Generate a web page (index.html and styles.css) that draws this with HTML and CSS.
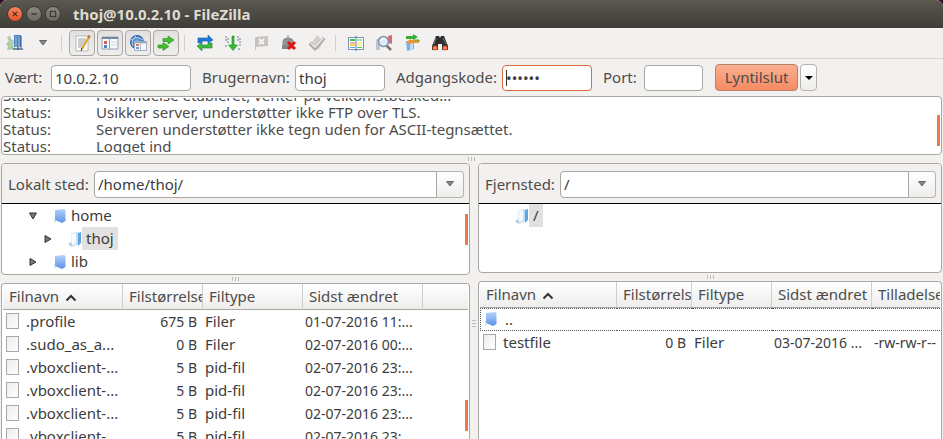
FILE: index.html
```html
<!DOCTYPE html>
<html lang="da">
<head>
<meta charset="utf-8">
<title>thoj@10.0.2.10 - FileZilla</title>
<link rel="stylesheet" href="styles.css">
</head>
<body>
<svg class="defs" aria-hidden="true">
  <defs>
    <linearGradient id="blue" x1="0" y1="0" x2="0" y2="1"><stop offset="0" stop-color="#b4d2fb"/><stop offset="1" stop-color="#5a92e8"/></linearGradient>
    <linearGradient id="open" x1="0" y1="0" x2="1" y2="0"><stop offset="0" stop-color="#e4f1f8"/><stop offset="1" stop-color="#b9ddf0"/></linearGradient>
    <linearGradient id="paper" x1="0" y1="0" x2="1" y2="1"><stop offset="0" stop-color="#ececec"/><stop offset="1" stop-color="#fff"/></linearGradient>
    <radialGradient id="globe"><stop offset="0" stop-color="#8fc1ee"/><stop offset="1" stop-color="#2458a8"/></radialGradient>
  </defs>
  <symbol id="folder" viewBox="0 0 14 16"><path d="M2 2 11 1 12.500 2V13L9 15 2 12Z" fill="url(#blue)"/><path d="M1 10 3 12.500 2.500 15 1 14Z" fill="#d9dde4"/></symbol>
  <symbol id="folder-open" viewBox="0 0 14 16"><path d="M3 2 10 1V14L3 13Z" fill="url(#open)"/><path d="M10 2 13 1V12L10 15Z" fill="#5fa5e2"/><path d="M4 3 8 2V12L4 13Z" fill="#f4fafd"/><path d="M0 13 3 11 4 14 9 15 3 15.500Z" fill="#b8c9d8"/></symbol>
  <symbol id="file" viewBox="0 0 13 16"><rect x=".5" y=".5" width="12" height="15" fill="url(#paper)" stroke="#a8a8a8"/></symbol>
  <symbol id="closed" viewBox="0 0 8 8"><path d="M1 .500 7 4 1 7.500Z" fill="#777" stroke="#333"/></symbol>
  <symbol id="opened" viewBox="0 0 8 8"><path d="M.500 1H7.500L4 7Z" fill="#777" stroke="#333"/></symbol>
  <symbol id="down" viewBox="0 0 8 6"><path d="M.500 .500H7.500L4 5Z" fill="#888" stroke="#666"/></symbol>
  <symbol id="sort" viewBox="0 0 12 8"><path d="M1.500 6.500 6 2 10.500 6.500" fill="none" stroke="#333" stroke-width="2"/></symbol>
</svg>

<div class="window">
  <header class="titlebar">
    <button class="wm wm-close" aria-label="Luk"><svg viewBox="0 0 16 16"><path d="M5.500 5.500 10.500 10.500M10.500 5.500 5.500 10.500" stroke="#4b2a1d" stroke-width="1.300"/></svg></button>
    <button class="wm" aria-label="Minimer"><svg viewBox="0 0 16 16"><path d="M5 8H11" stroke="#3a3935" stroke-width="1.500"/></svg></button>
    <button class="wm" aria-label="Maksimer"><svg viewBox="0 0 16 16"><rect x="5" y="5" width="6" height="6" fill="none" stroke="#3a3935" stroke-width="1.300"/></svg></button>
    <h1>thoj@10.0.2.10 - FileZilla</h1>
  </header>

  <nav class="toolbar">
    <button class="tool" aria-label="Stedhåndtering"><svg viewBox="0 0 18 18"><path d="M1 3 4 2 5 5 8 7 7 12 9 15 1 16 2 12 0 10 3 7Z" fill="#a9c8a4"/><path d="M2 6 6 9 3 13" fill="none" stroke="#c9dcc4"/><path d="M8 1H15V13H8Z" fill="#4b80bd"/><path d="M10 2V13M13 2V13" stroke="#a9c7e8"/><path d="M15 2V14" stroke="#2f5992"/><path d="M7 15H17M12 13V16" stroke="#506b8e" stroke-width="1.500"/></svg></button>
    <button class="tool" aria-label="Vælg sted"><svg class="arrow" viewBox="0 0 8 6"><use href="#down"/></svg></button>
    <span class="divider"></span>
    <button class="tool toggle" aria-label="Meddelelseslog"><svg viewBox="0 0 18 18"><path d="M3 2H15V17H3Z" fill="#fff" stroke="#b5b5b5"/><path d="M5 5H13M5 7H13M5 9H12M5 11H11M5 13H10" stroke="#999"/><path d="M16 3 9 15" stroke="#e2a51f" stroke-width="2"/><path d="M16.500 1.500 15.500 4" stroke="#c76b50" stroke-width="2.500"/><path d="M9 14 8 17" stroke="#333"/></svg></button>
    <button class="tool toggle" aria-label="Lokalt mappetræ"><svg viewBox="0 0 18 18"><path d="M1 3H17V15H1Z" fill="#f8f9fb" stroke="#8ea2b6"/><path d="M1 4H17" stroke="#7189a3" stroke-width="2"/><path d="M8.500 4V15" stroke="#8ea2b6"/><rect x="3" y="7" width="3" height="3" fill="#d65a55"/><rect x="3" y="11" width="3" height="3" fill="#5187c8"/><path d="M10 8H16M10 11H16" stroke="#ccd4dd"/></svg></button>
    <button class="tool toggle" aria-label="Fjernmappetræ"><svg viewBox="0 0 18 18"><circle cx="8" cy="8" r="7" fill="url(#globe)"/><path d="M2 6Q8 1 14 6M4 12Q1 7 7 2" stroke="#b8d8f5" fill="none"/><path d="M5.500 7.500H17.500V16.500H5.500Z" fill="#f7f8fb" stroke="#a2afc2"/><path d="M6 8.500H17" stroke="#91a4bb" stroke-width="1.500"/><path d="M11.500 9V16" stroke="#b3bdca"/><rect x="7" y="10" width="3" height="2" fill="#df7369"/><rect x="7" y="13" width="3" height="2" fill="#6a9ad2"/></svg></button>
    <button class="tool toggle" aria-label="Overførselskø"><svg viewBox="0 0 18 18"><path d="M6 4.500H11V2L17 6 11 10V7.500H6Z" fill="#43bd32" stroke="#2c9a28" stroke-width=".7"/><path d="M1 11H6V8.500L12 12.500 6 16.500V14H1Z" fill="#43bd32" stroke="#2c9a28" stroke-width=".7"/></svg></button>
    <span class="divider"></span>
    <button class="tool" aria-label="Opdater"><svg viewBox="0 0 18 18"><path d="M2 9V4H12V1L17 6 12 9V7H6V9Z" fill="#2178d4" stroke="#145ba9" stroke-width=".6"/><path d="M16 9V14H6V17L1 12 6 9V11H12V9Z" fill="#40ba43" stroke="#188028" stroke-width=".6"/></svg></button>
    <button class="tool" aria-label="Behandl kø"><svg viewBox="0 0 18 18"><path d="M2 2V7M4 4V10M14 2V8M16 4V12M2 11V13M15 14V16" stroke="#a9b9bd" stroke-width="2" stroke-dasharray="2 1"/><path d="M8 2H10V11H13.500L9 16.500 4.500 11H8Z" fill="#37b932" stroke="#1b8e20" stroke-width=".6"/></svg></button>
    <button class="tool" aria-label="Annuller"><svg viewBox="0 0 18 18"><path d="M3 3 16 2V12L4 13V16H3Z" fill="#c6c4c1"/><path d="M7 5 12 10M12 5 7 10" stroke="#f7f6f5" stroke-width="2"/></svg></button>
    <button class="tool" aria-label="Afbryd"><svg viewBox="0 0 18 18"><path d="M8 1V4M3 14V8Q3 4 8 4T13 8V14Z" fill="#929292" stroke="#8b8b8b"/><path d="M2 11H10V15H2Z" fill="#858585"/><path d="M8 8 15 15M15 8 8 15" stroke="#db1718" stroke-width="3"/></svg></button>
    <button class="tool" aria-label="Genopret"><svg viewBox="0 0 18 18"><path d="M9 1 15 7 12 14 9 16 3 10Z" fill="#d3d1cf"/><path d="M2 9 7 14 16 4" fill="none" stroke="#aaa8a6" stroke-width="4"/><path d="M3 9 7 13 15 4" fill="none" stroke="#e5e3e1" stroke-width="2"/></svg></button>
    <span class="divider"></span>
    <button class="tool" aria-label="Sammenlign mapper"><svg viewBox="0 0 18 18"><path d="M1.500 3.500H16.500V15.500H1.500Z" fill="#fff" stroke="#7893b1"/><path d="M3 6H8" stroke="#37c64a" stroke-width="2"/><path d="M3 9H8" stroke="#ee635e"/><path d="M3 11H8" stroke="#f6d84e" stroke-width="2"/><path d="M3 13.500H8" stroke="#5ba5e4"/><path d="M10 6H15M10 13.500H15" stroke="#43c953"/><path d="M10 9H15M10 11H15" stroke="#f2df55"/><path d="M9 2V17" stroke="#537aa5"/></svg></button>
    <button class="tool" aria-label="Filtre"><svg viewBox="0 0 18 18"><path d="M1 6 5 3V16H1Z" fill="#c3c5ce"/><path d="M13 2 17 1V10L13 9Z" fill="#db6872"/><path d="M11 11 16 16" stroke="#886f60" stroke-width="2.500"/><circle cx="8.500" cy="7.500" r="5" fill="#dceafb" stroke="#8293a8" stroke-width="1.500"/><path d="M5.500 7Q8 3 11 6" stroke="#fff" fill="none" stroke-width="1.500"/></svg></button>
    <button class="tool" aria-label="Synkroniseret gennemsyn"><svg viewBox="0 0 18 18"><path d="M3 7 11 7V15L4 17Z" fill="#74b5ed"/><path d="M7 9 10 8V15L7 17Z" fill="#bde0fa"/><path d="M3 2H10V0L15 3 10 6V5H3Z" fill="#39ae3b"/><path d="M16 9H8V11L3 8 8 5V6H16Z" fill="#ee9634"/><path d="M11 6H16V8" stroke="#4eae3b" fill="none"/></svg></button>
    <button class="tool" aria-label="Søg"><svg viewBox="0 0 18 18"><path d="M5 2H8L9 4 10 2H13L17 12V16H11V10H7V16H1V12Z" fill="#2d2d2d"/><path d="M5 4 3 10M12 4 15 10" stroke="#777"/><circle cx="4" cy="14" r="2.500" fill="#ef5a2f"/><circle cx="14" cy="14" r="2.500" fill="#ef5a2f"/><circle cx="4" cy="14" r="1" fill="#ffad83"/><circle cx="14" cy="14" r="1" fill="#ffad83"/></svg></button>
  </nav>

  <form class="connect">
    <label for="host">Vært:</label><input id="host" value="10.0.2.10">
    <label for="user">Brugernavn:</label><input id="user" value="thoj">
    <label for="pass">Adgangskode:</label><input id="pass" class="focused" type="password" value="secret">
    <label for="port">Port:</label><input id="port">
    <div class="connect-actions">
      <button type="button" class="quick">Lyntilslut</button>
      <button type="button" class="history" aria-label="Historik"><svg viewBox="0 0 8 4"><path d="M0 0H8L4 4Z"/></svg></button>
    </div>
  </form>

  <section class="log box">
    <div class="log-view">
      <dl>
        <dt>Status:</dt><dd>Forbindelse etableret, venter på velkomstbesked...</dd>
        <dt>Status:</dt><dd>Usikker server, understøtter ikke FTP over TLS.</dd>
        <dt>Status:</dt><dd>Serveren understøtter ikke tegn uden for ASCII-tegnsættet.</dd>
        <dt>Status:</dt><dd>Logget ind</dd>
      </dl>
    </div>
    <span class="thumb thumb-log"></span>
  </section>
  <div class="sash"><i></i><i></i><i></i></div>

  <main class="panes">
    <section class="pane local">
      <div class="site box">
        <div class="address">
          <label for="local">Lokalt sted:</label>
          <input id="local" value="/home/thoj/"><button aria-label="Vis stier"><svg class="arrow"><use href="#down"/></svg></button>
        </div>
        <ul class="tree">
          <li><svg class="expander"><use href="#opened"/></svg><svg class="folder"><use href="#folder"/></svg><span>home</span></li>
          <li class="child"><svg class="expander"><use href="#closed"/></svg><svg class="folder"><use href="#folder-open"/></svg><span class="selected">thoj</span></li>
          <li><svg class="expander"><use href="#closed"/></svg><svg class="folder"><use href="#folder"/></svg><span>lib</span></li>
        </ul>
        <span class="thumb thumb-tree"></span>
      </div>
      <div class="sash"><i></i><i></i><i></i></div>
      <div class="files box">
        <table>
          <colgroup><col class="c-name"><col class="c-size"><col class="c-type"><col class="c-date"><col></colgroup>
          <thead><tr><th>Filnavn <svg class="sort"><use href="#sort"/></svg></th><th>Filstørrelse</th><th>Filtype</th><th>Sidst ændret</th><th></th></tr></thead>
          <tbody>
            <tr><td><div class="name"><svg class="file"><use href="#file"/></svg>.profile</div></td><td class="num">675 B</td><td>Filer</td><td class="date">01-07-2016 11:...</td><td></td></tr>
            <tr><td><div class="name"><svg class="file"><use href="#file"/></svg>.sudo_as_a...</div></td><td class="num">0 B</td><td>Filer</td><td class="date">02-07-2016 00:...</td><td></td></tr>
            <tr><td><div class="name"><svg class="file"><use href="#file"/></svg>.vboxclient-...</div></td><td class="num">5 B</td><td>pid-fil</td><td class="date">02-07-2016 23:...</td><td></td></tr>
            <tr><td><div class="name"><svg class="file"><use href="#file"/></svg>.vboxclient-...</div></td><td class="num">5 B</td><td>pid-fil</td><td class="date">02-07-2016 23:...</td><td></td></tr>
            <tr><td><div class="name"><svg class="file"><use href="#file"/></svg>.vboxclient-...</div></td><td class="num">5 B</td><td>pid-fil</td><td class="date">02-07-2016 23:...</td><td></td></tr>
            <tr><td><div class="name"><svg class="file"><use href="#file"/></svg>.vboxclient-...</div></td><td class="num">5 B</td><td>pid-fil</td><td class="date">02-07-2016 23:...</td><td></td></tr>
          </tbody>
        </table>
        <span class="thumb thumb-files"></span>
      </div>
    </section>

    <div class="sash sash-vertical"><i></i><i></i><i></i></div>

    <section class="pane remote">
      <div class="site box">
        <div class="address">
          <label for="remote">Fjernsted:</label>
          <input id="remote" value="/"><button aria-label="Vis stier"><svg class="arrow"><use href="#down"/></svg></button>
        </div>
        <ul class="tree">
          <li><svg class="folder"><use href="#folder-open"/></svg><span class="selected">/</span></li>
        </ul>
      </div>
      <div class="sash"><i></i><i></i><i></i></div>
      <div class="files box">
        <table>
          <colgroup><col class="c-name"><col class="c-size"><col class="c-type"><col class="c-date"><col></colgroup>
          <thead><tr><th>Filnavn <svg class="sort"><use href="#sort"/></svg></th><th>Filstørrelse</th><th>Filtype</th><th>Sidst ændret</th><th>Tilladelser</th></tr></thead>
          <tbody>
            <tr class="current"><td><div class="name"><svg class="folder"><use href="#folder"/></svg>..</div></td><td></td><td></td><td></td><td></td></tr>
            <tr><td><div class="name"><svg class="file"><use href="#file"/></svg>testfile</div></td><td class="num">0 B</td><td>Filer</td><td class="date">03-07-2016 ...</td><td class="date">-rw-rw-r--</td></tr>
          </tbody>
        </table>
      </div>
    </section>
  </main>
</div>
</body>
</html>
```
FILE: styles.css
```css
* { box-sizing: border-box; }

body {
  margin: 0;
  background: #2c0a22;
  color: #4c4c4c;
  font: 15px/17px "Noto Sans", "Open Sans", sans-serif;
}

button, input { font: inherit; color: inherit; }
button { padding: 0; }
svg { display: block; flex: none; }
.defs { position: absolute; width: 0; height: 0; }

.window {
  display: flex;
  flex-direction: column;
  height: 100vh;
  overflow: hidden;
  border-radius: 7px 7px 0 0;
  background: #f2f1f0;
}

.box {
  position: relative;
  border: 1px solid #aaa6a1;
  border-radius: 4px;
  background: #fff;
  overflow: hidden;
}

/* Title bar */
.titlebar {
  display: flex;
  align-items: center;
  gap: 3px;
  height: 28px;
  flex: none;
  padding: 0 7px;
  background: linear-gradient(#5b5850, #3d3c37);
}

.titlebar h1 {
  margin: 0 0 0 9px;
  color: #dfdbd2;
  font-size: 15px;
  font-weight: bold;
}

.wm {
  width: 16px;
  height: 16px;
  border: 1px solid #3b3a36;
  border-radius: 50%;
  background: linear-gradient(#8b8980, #6b6962);
}

.wm svg { width: 14px; height: 14px; }
.wm-close { background: linear-gradient(#f58560, #e2552a); }

/* Toolbar */
.toolbar {
  display: flex;
  align-items: center;
  gap: 2px;
  height: 31px;
  flex: none;
  padding: 0 2px;
  border-bottom: 1px solid #d6d3d0;
}

.tool {
  display: grid;
  place-items: center;
  width: 26px;
  height: 26px;
  border: 0;
  border-radius: 4px;
  background: none;
}

.tool svg { width: 18px; height: 18px; }
.tool .arrow { width: 8px; height: 6px; }
.arrow { width: 8px; height: 6px; }

.toggle {
  border: 1px solid #aaa7a3;
  background: linear-gradient(#e3e1df, #efeeed);
}

.divider {
  width: 1px;
  height: 16px;
  margin: 0 5px 0 3px;
  background: #d3d0cd;
}

/* Quick connect */
.connect {
  display: grid;
  grid-template-columns: 46px 140px 104px 90px 117px 90px 52px 59px auto;
  align-items: center;
  justify-content: start;
  height: 37px;
  flex: none;
  padding-left: 5px;
}

.connect label { padding-left: 11px; }
.connect label:first-child { padding-left: 0; }

.connect input {
  width: 100%;
  height: 26px;
  padding: 0 3px;
  border: 1px solid #aaa6a1;
  border-radius: 4px;
  background: #fff;
  color: #3c3c3c;
  outline: 0;
}

.connect .focused {
  border-color: #dc6a40;
  background: linear-gradient(#333, #333) 3px 4px / 1px 16px no-repeat #fff;
}

.connect-actions {
  display: flex;
  gap: 2px;
  padding-left: 12px;
}

.quick, .history {
  height: 27px;
  border: 1px solid #b7b3af;
  border-radius: 4px;
}

.quick {
  width: 83px;
  border-color: #b78069;
  background: linear-gradient(#fbb091, #f48a60);
}

.history {
  display: grid;
  place-items: center;
  width: 17px;
  background: linear-gradient(#fff, #eeedec);
}

.history svg { width: 8px; height: 4px; }

/* Message log */
.log {
  height: 59px;
  flex: none;
  margin: 0 1px;
  padding: 1px;
}

.log-view { height: 55px; overflow: hidden; }

.log dl {
  display: grid;
  grid-template-columns: 93px 1fr;
  margin: -11px 0 0;
}

.log dd { margin: 0; }

.thumb {
  position: absolute;
  right: 1px;
  width: 3px;
  height: 31px;
  background: #f07746;
}

.thumb-log { top: 18px; }
.thumb-tree { top: 50px; }
.thumb-files { top: 116px; }

/* Splitters */
.sash {
  display: flex;
  align-items: center;
  justify-content: center;
  gap: 2px;
  height: 8px;
  flex: none;
}

.sash i { width: 1px; height: 4px; background: #bdbab7; }

.sash-vertical {
  flex-direction: column;
  justify-content: flex-start;
  width: 8px;
  height: auto;
  padding-top: 157px;
}

.sash-vertical i { width: 4px; height: 1px; }

/* Panes */
.panes {
  display: grid;
  grid-template-columns: 469fr 8px 464fr;
  flex: 1;
  min-height: 0;
  padding: 0 1px;
}

.pane {
  display: flex;
  flex-direction: column;
  min-width: 0;
  min-height: 0;
}

.site { height: 112px; flex: none; padding: 0 1px; }
.remote .site { height: 110px; }

.address {
  display: flex;
  align-items: center;
  height: 40px;
  margin: 0 -1px;
  padding: 1px 5px 0 6px;
  background: #f2f1f0;
  border-bottom: 1px solid #000;
}

.address label { width: 86px; }
.remote .address label { width: 75px; }

.address input {
  flex: 1;
  min-width: 0;
  height: 27px;
  padding: 0 3px;
  border: 1px solid #aaa6a1;
  border-radius: 4px 0 0 4px;
  background: #fff;
  color: #3c3c3c;
}

.address button {
  display: grid;
  place-items: center;
  width: 27px;
  height: 27px;
  border: 1px solid #b7b3af;
  border-left: 0;
  border-radius: 0 4px 4px 0;
  background: linear-gradient(#fff, #eeedec);
}

.tree {
  margin: 0;
  padding: 0 0 0 26px;
  list-style: none;
  color: #3c3c3c;
}

.tree li { display: flex; align-items: center; height: 23px; }
.tree .child { padding-left: 15px; }
.remote .tree { padding-left: 35px; }
.expander { width: 8px; height: 8px; margin-right: 16px; }
.folder { width: 14px; height: 16px; }
.tree span { padding: 3px 4px; }
.tree .selected { background: #e3e1df; }

/* File lists */
.files {
  flex: 1;
  min-height: 0;
  border-bottom: 0;
  border-radius: 4px 4px 0 0;
  padding: 0 1px;
}

.files table {
  width: 100%;
  table-layout: fixed;
  border-collapse: separate;
  border-spacing: 0;
  color: #3c3c3c;
}

.c-name { width: 120px; }
.c-size { width: 80px; }
.c-type { width: 100px; }
.c-date { width: 120px; }
.remote .c-name { width: 137px; }
.remote .c-size { width: 75px; }
.remote .c-type { width: 80px; }
.remote .c-date { width: 100px; }

.files th {
  height: 26px;
  padding: 0 0 0 6px;
  border-right: 1px solid #d0cdca;
  border-bottom: 1px solid #aaa6a1;
  background: linear-gradient(#fff, #eeedec);
  color: #4c4c4c;
  font-weight: normal;
  text-align: left;
  white-space: nowrap;
  overflow: hidden;
}

.files th:last-child { border-right: 0; }

.sort {
  display: inline-block;
  width: 12px;
  height: 8px;
  margin-left: 2px;
}

.files td {
  height: 23px;
  padding: 0 2px 1px;
  white-space: nowrap;
  overflow: hidden;
}

.files .num { padding-right: 6px; text-align: right; }
.files .num, .files .date { font-size: 14px; }
.name { display: flex; align-items: center; gap: 7px; padding-left: 1px; }
.file { width: 13px; height: 16px; }
.current td { border: 0 dotted #555; border-width: 1px 0; }
.current td:first-child { border-left-width: 1px; }
```
